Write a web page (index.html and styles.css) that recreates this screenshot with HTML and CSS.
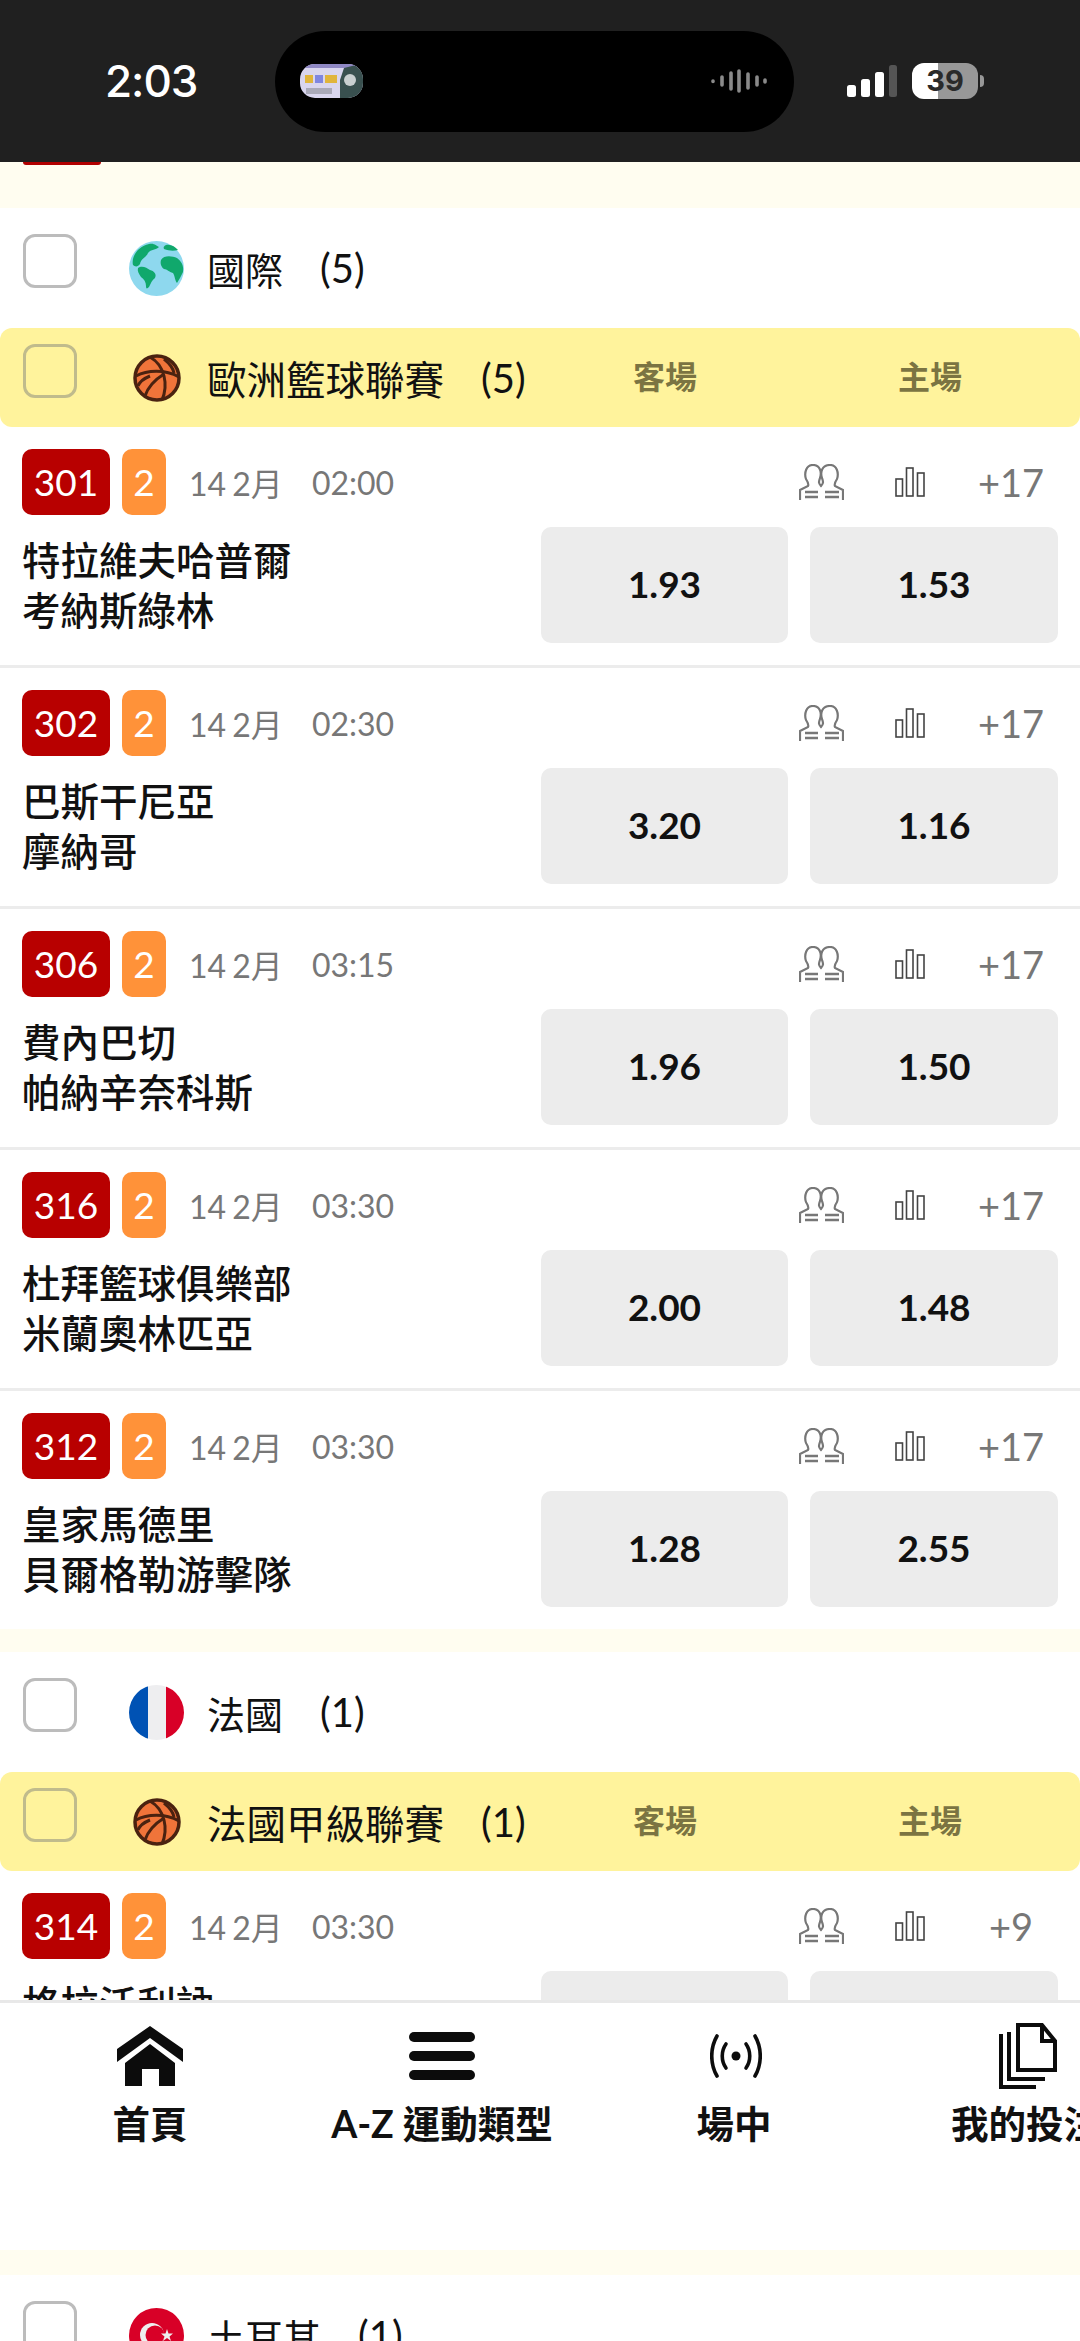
FILE: index.html

```html
<!DOCTYPE html>
<html lang="zh-Hant">
<head>
<meta charset="utf-8">
<title>歐洲籃球聯賽</title>
<link rel="stylesheet" href="styles.css">
</head>
<body>
<svg class="sprite" width="0" height="0">
  <defs>
    <symbol id="ball" viewBox="0 0 48 48">
      <circle cx="24" cy="24" r="22" fill="#f0743a" stroke="#4a2210" stroke-width="3.5"/>
      <g fill="none" stroke="#4a2210" stroke-width="3">
        <path d="M3 22C14 16 32 15 46 23"/>
        <path d="M17 3C24 7 29 14 31 22C33 30 32 39 29 46"/>
        <path d="M31 20C23 25 15 33 12 42"/>
        <path d="M31 5C36 9 40 14 41 19"/>
        <path d="M5 32C7 27 12 24 17 22"/>
      </g>
    </symbol>
    <symbol id="people" viewBox="0 0 45 36">
      <g fill="none" stroke="#777" stroke-width="2.2">
        <path d="M1 36V26L9 22C10 20 9 18 7 15C5 9 7 1 14 1C21 1 23 8 21 14C20 17 19 19 22 22C25 19 24 17 23 14C21 8 23 1 31 1C38 1 40 9 38 15C36 18 35 20 36 22L44 26V36"/>
      </g>
      <path d="M6 28H19M6 33H19M26 28H40M26 33H40" stroke="#777" stroke-width="2.4"/>
    </symbol>
    <symbol id="bars" viewBox="0 0 30 30">
      <g fill="#fff" stroke="#444" stroke-width="1.6">
        <rect x="1" y="12" width="6.5" height="17"/>
        <rect x="11.5" y="1" width="6.5" height="28"/>
        <rect x="22.5" y="6" width="6.5" height="23"/>
      </g>
    </symbol>
  </defs>
</svg>

<header class="status">
  <span class="clock">2:03</span>
  <div class="island">
    <svg class="thumb" viewBox="0 0 63 34">
      <rect width="63" height="34" fill="#d9d6ee"/>
      <rect x="0" y="0" width="63" height="4" fill="#8f88c4"/>
      <rect x="5" y="11" width="8" height="8" fill="#e0b53c"/>
      <rect x="15" y="11" width="8" height="8" fill="#7f86e0"/>
      <rect x="25" y="11" width="12" height="8" fill="#e0b53c"/>
      <rect x="6" y="24" width="26" height="6" fill="#a9a9b8"/>
      <path d="M40 34V16L44 4L56 1L63 6V34Z" fill="#39504f"/>
      <circle cx="50" cy="16" r="6" fill="#c9cfd0"/>
    </svg>
    <svg class="wave" viewBox="0 0 56 24">
      <g stroke="#8a8a8a" stroke-width="3.6" stroke-linecap="round">
        <path d="M2 12V12.5M11 8V16M20 4V20M28 2V22M37 5V19M46 8V16M54 11V13"/>
      </g>
    </svg>
  </div>
  <div class="status-right">
    <svg class="signal" viewBox="0 0 50 32">
      <rect x="0" y="20" width="9" height="12" rx="2.5" fill="#fff"/>
      <rect x="14" y="14" width="9" height="18" rx="2.5" fill="#fff"/>
      <rect x="28" y="7" width="9" height="25" rx="2.5" fill="#fff"/>
      <rect x="42" y="0" width="8" height="32" rx="2.5" fill="#555"/>
    </svg>
    <span class="battery">39</span>
    <span class="battery-nub"></span>
  </div>
</header>

<div class="gap gap-top"><div class="sliver"></div></div>

<main class="list">
  <section class="group">
    <div class="country">
      <span class="check"></span>
      <svg class="flag" viewBox="0 0 55 55">
        <circle cx="27.5" cy="27.5" r="27.5" fill="#8ed8ee"/>
        <g fill="#10a86c">
          <path d="M4 24C2 16 9 5 20 3C26 2 27 5 30 6C27 9 22 8 19 12C17 17 12 17 11 23C9 26 6 26 4 24Z"/>
          <path d="M37 4C42 3 46 6 49 9C45 10 40 10 35 8C34 6 35 5 37 4Z"/>
          <path d="M32 19C35 14 43 15 48 17C52 20 55 24 54 31C52 35 50 39 48 42C46 40 46 35 44 32C40 31 38 28 35 28C32 26 31 22 32 19Z"/>
          <path d="M9 27C13 24 18 27 21 29C25 30 28 33 26 37C23 39 22 42 20 46C18 48 17 48 17 45C17 41 15 38 12 36C10 33 8 30 9 27Z"/>
        </g>
      </svg>
      <span class="title">國際</span><span class="count">(5)</span>
    </div>
    <div class="league">
      <span class="check"></span>
      <svg class="ball"><use href="#ball"/></svg>
      <span class="title">歐洲籃球聯賽</span><span class="count">(5)</span>
      <span class="side side-away">客場</span>
      <span class="side side-home">主場</span>
    </div>

    <article class="match">
      <div class="match-top">
        <span class="code">301</span><span class="period">2</span>
        <span class="date">14 2月</span><span class="time">02:00</span>
        <svg class="people"><use href="#people"/></svg>
        <svg class="bars"><use href="#bars"/></svg>
        <span class="more">+17</span>
      </div>
      <div class="match-body">
        <div class="names"><div>特拉維夫哈普爾</div><div>考納斯綠林</div></div>
        <button class="odd">1.93</button><button class="odd">1.53</button>
      </div>
    </article>
    <article class="match">
      <div class="match-top">
        <span class="code">302</span><span class="period">2</span>
        <span class="date">14 2月</span><span class="time">02:30</span>
        <svg class="people"><use href="#people"/></svg>
        <svg class="bars"><use href="#bars"/></svg>
        <span class="more">+17</span>
      </div>
      <div class="match-body">
        <div class="names"><div>巴斯干尼亞</div><div>摩納哥</div></div>
        <button class="odd">3.20</button><button class="odd">1.16</button>
      </div>
    </article>
    <article class="match">
      <div class="match-top">
        <span class="code">306</span><span class="period">2</span>
        <span class="date">14 2月</span><span class="time">03:15</span>
        <svg class="people"><use href="#people"/></svg>
        <svg class="bars"><use href="#bars"/></svg>
        <span class="more">+17</span>
      </div>
      <div class="match-body">
        <div class="names"><div>費內巴切</div><div>帕納辛奈科斯</div></div>
        <button class="odd">1.96</button><button class="odd">1.50</button>
      </div>
    </article>
    <article class="match">
      <div class="match-top">
        <span class="code">316</span><span class="period">2</span>
        <span class="date">14 2月</span><span class="time">03:30</span>
        <svg class="people"><use href="#people"/></svg>
        <svg class="bars"><use href="#bars"/></svg>
        <span class="more">+17</span>
      </div>
      <div class="match-body">
        <div class="names"><div>杜拜籃球俱樂部</div><div>米蘭奧林匹亞</div></div>
        <button class="odd">2.00</button><button class="odd">1.48</button>
      </div>
    </article>
    <article class="match match-last">
      <div class="match-top">
        <span class="code">312</span><span class="period">2</span>
        <span class="date">14 2月</span><span class="time">03:30</span>
        <svg class="people"><use href="#people"/></svg>
        <svg class="bars"><use href="#bars"/></svg>
        <span class="more">+17</span>
      </div>
      <div class="match-body">
        <div class="names"><div>皇家馬德里</div><div>貝爾格勒游擊隊</div></div>
        <button class="odd">1.28</button><button class="odd">2.55</button>
      </div>
    </article>
  </section>

  <div class="gap"></div>

  <section class="group">
    <div class="country">
      <span class="check"></span>
      <svg class="flag" viewBox="0 0 55 55">
        <clipPath id="round-fr"><circle cx="27.5" cy="27.5" r="27.5"/></clipPath>
        <g clip-path="url(#round-fr)">
          <rect width="19" height="55" fill="#0052b4"/>
          <rect x="19" width="18" height="55" fill="#eeeef0"/>
          <rect x="37" width="18" height="55" fill="#d80027"/>
        </g>
      </svg>
      <span class="title">法國</span><span class="count">(1)</span>
    </div>
    <div class="league">
      <span class="check"></span>
      <svg class="ball"><use href="#ball"/></svg>
      <span class="title">法國甲級聯賽</span><span class="count">(1)</span>
      <span class="side side-away">客場</span>
      <span class="side side-home">主場</span>
    </div>
    <article class="match">
      <div class="match-top">
        <span class="code">314</span><span class="period">2</span>
        <span class="date">14 2月</span><span class="time">03:30</span>
        <svg class="people"><use href="#people"/></svg>
        <svg class="bars"><use href="#bars"/></svg>
        <span class="more">+9</span>
      </div>
      <div class="match-body">
        <div class="names"><div>格拉沃利訥</div><div>&nbsp;</div></div>
        <button class="odd"></button><button class="odd"></button>
      </div>
    </article>
  </section>
</main>

<nav class="tabs">
  <a class="tab">
    <svg class="tab-icon" width="66" height="60" viewBox="0 0 66 60">
      <path d="M33 0L66 23V36L33 12L0 36V23Z" fill="#0c0c0c"/>
      <path fill-rule="evenodd" d="M33 18L58 37V60H8V37ZM25 43V60H42V43Z" fill="#0c0c0c"/>
    </svg>
    <span>首頁</span>
  </a>
  <a class="tab">
    <svg class="tab-icon" width="66" height="48" viewBox="0 0 66 48">
      <rect width="66" height="10" y="0" rx="5" fill="#0c0c0c"/>
      <rect width="66" height="10" y="19" rx="5" fill="#0c0c0c"/>
      <rect width="66" height="10" y="38" rx="5" fill="#0c0c0c"/>
    </svg>
    <span>A-Z 運動類型</span>
  </a>
  <a class="tab tab-live">
    <svg class="tab-icon" width="52" height="44" viewBox="0 0 52 44">
      <circle cx="26" cy="22" r="4.500" fill="#0c0c0c"/>
      <g fill="none" stroke="#0c0c0c" stroke-width="3.600" stroke-linecap="round">
        <path d="M16 10C11 17 11 27 16 34M36 10C41 17 41 27 36 34"/>
        <path d="M7 2C0 14 0 30 7 42M45 2C52 14 52 30 45 42"/>
      </g>
    </svg>
    <span>場中</span>
  </a>
  <a class="tab tab-bets">
    <svg class="tab-icon" width="58" height="66" viewBox="0 0 58 66">
      <g fill="none" stroke="#0c0c0c" stroke-width="4">
        <path d="M19 2H43L56 18V47H19Z"/>
        <path d="M43 2V18H56"/>
        <path d="M10 9V56H46"/>
        <path d="M2 11V64H37"/>
      </g>
    </svg>
    <span>我的投注</span>
  </a>
</nav>

<div class="gap gap-low"></div>

<section class="group">
  <div class="country">
    <span class="check"></span>
    <svg class="flag" viewBox="0 0 55 55">
      <circle cx="27.5" cy="27.5" r="27.5" fill="#d80027"/>
      <circle cx="23" cy="27" r="12" fill="#eee"/>
      <circle cx="26" cy="27" r="9.5" fill="#d80027"/>
      <path d="M38 21L39.5 25.500L44 25.500L40.500 28.500L42 33L38 30L34 33L35.500 28.500L32 25.500L36.500 25.500Z" fill="#eee"/>
    </svg>
    <span class="title">土耳其</span><span class="count">(1)</span>
  </div>
</section>
</body>
</html>
```

FILE: styles.css

```css
html, body {
    margin: 0;
    padding: 0;
}

body {
    width: 1080px;
    height: 2341px;
    overflow: hidden;
    background: #fff;
    color: #111;
    font-family: Lato, "Noto Sans CJK TC", sans-serif;
}

.sprite {
    display: block;
    height: 0;
}

/* status bar */
.status {
    display: flex;
    align-items: center;
    height: 162px;
    background: #202020;
}

.clock {
    width: 275px;
    padding-left: 105px;
    padding-bottom: 1px;
    box-sizing: border-box;
    color: #fff;
    font-family: Inter, sans-serif;
    font-size: 44px;
    font-weight: 500;
    letter-spacing: -1px;
}

.island {
    display: flex;
    align-items: center;
    justify-content: space-between;
    width: 519px;
    height: 101px;
    padding: 0 27px 0 25px;
    box-sizing: border-box;
    background: #000;
    border-radius: 51px;
}

.thumb {
    width: 63px;
    height: 34px;
    border-radius: 15px;
}

.wave {
    width: 56px;
    height: 24px;
}

.status-right {
    display: flex;
    align-items: center;
    margin-left: 53px;
}

.signal {
    width: 50px;
    height: 32px;
}

.battery {
    width: 66px;
    height: 36px;
    margin-left: 15px;
    border-radius: 12px;
    background: linear-gradient(to right, #fff 0 26px, #989898 26px);
    color: #2a2a2a;
    font-family: Inter, sans-serif;
    font-size: 29px;
    font-weight: 700;
    line-height: 36px;
    text-align: center;
}

.battery-nub {
    width: 4px;
    height: 12px;
    margin-left: 2px;
    background: #989898;
    border-radius: 0 6px 6px 0;
}

/* cream gaps between groups */
.gap {
    height: 23px;
    background: #fffdf0;
}

.gap-top {
    height: 46px;
}

.gap-low {
    height: 25px;
}

.sliver {
    width: 78px;
    height: 3px;
    margin-left: 23px;
    background: #b00000;
    border-radius: 0 0 3px 3px;
}

.list {
    height: 1792px;
    overflow: hidden;
}

.group {
    background: #fff;
    border-radius: 12px 12px 0 0;
}

/* group headers */
.country,
.league {
    display: flex;
    align-items: center;
    font-size: 38px;
    padding-left: 23px;
}

.country {
    height: 120px;
}

.league {
    position: relative;
    height: 99px;
    background: #fff39c;
    border-radius: 12px;
    font-size: 39.5px;
}

.check {
    flex: none;
    align-self: flex-start;
    width: 54px;
    height: 54px;
    margin-top: 26px;
    box-sizing: border-box;
    border: 3px solid #bcbcbc;
    border-radius: 12px;
}

.league .check {
    margin-top: 16px;
    border-color: #c0bb8c;
}

.flag {
    flex: none;
    width: 55px;
    height: 55px;
    margin: 0 23px 0 52px;
}

.ball {
    flex: none;
    width: 48px;
    height: 48px;
    margin: 0 26px 0 56px;
}

.count {
    margin-left: 37px;
    font-size: 40px;
}

.side {
    position: absolute;
    top: 29px;
    color: #7b7442;
    font-size: 32px;
    font-weight: 700;
    line-height: 40px;
}

.side-away {
    left: 633px;
}

.side-home {
    left: 898px;
}

/* match rows */
.match {
    padding: 22px 22px 22px;
    border-bottom: 3px solid #ececec;
}

.match-last {
    border-bottom: 0;
}

.match-top {
    display: flex;
    align-items: center;
    height: 66px;
}

.code,
.period {
    height: 66px;
    border-radius: 10px;
    color: #fff;
    font-size: 37px;
    line-height: 66px;
    text-align: center;
}

.code {
    width: 88px;
    background: #b80000;
}

.period {
    width: 44px;
    margin-left: 12px;
    background: #ff9239;
}

.date,
.time,
.more {
    color: #777;
    font-size: 32px;
}

.date {
    margin-left: 23px;
    word-spacing: -2px;
}

.time {
    margin-left: 29px;
}

.people {
    width: 45px;
    height: 36px;
    margin-left: auto;
    margin-right: 51px;
}

.bars {
    width: 30px;
    height: 30px;
    margin-right: 46px;
}

.more {
    width: 80px;
    margin-right: 7px;
    font-size: 38px;
    text-align: center;
}

.match-body {
    display: flex;
    gap: 22px;
    margin-top: 12px;
}

.names {
    flex: 1;
    align-self: center;
    font-size: 38.5px;
    font-weight: 500;
    line-height: 50px;
}

.odd {
    flex: none;
    width: 247px;
    height: 116px;
    padding: 0 0 3px;
    border: 0;
    border-radius: 10px;
    background: #ececec;
    color: #111;
    font-family: Lato, sans-serif;
    font-size: 37px;
    font-weight: 700;
}

.odd + .odd {
    width: 248px;
}

/* bottom tabs */
.tabs {
    display: flex;
    height: 250px;
    padding-left: 4px;
    box-sizing: border-box;
    background: #fff;
    border-top: 3px solid #e8e8e8;
    overflow: hidden;
}

.tab {
    flex: none;
    display: flex;
    flex-direction: column;
    align-items: center;
    width: 292px;
    padding-top: 20px;
    box-sizing: border-box;
    font-size: 37.5px;
    font-weight: 700;
    color: #111;
}

.tab-icon {
    height: 66px;
}

.tab-live .tab-icon {
    margin-left: 4px;
}

.tab-bets .tab-icon {
    margin-left: 3px;
}

.tab span {
    margin-top: 10px;
    line-height: 50px;
    white-space: nowrap;
}
```
